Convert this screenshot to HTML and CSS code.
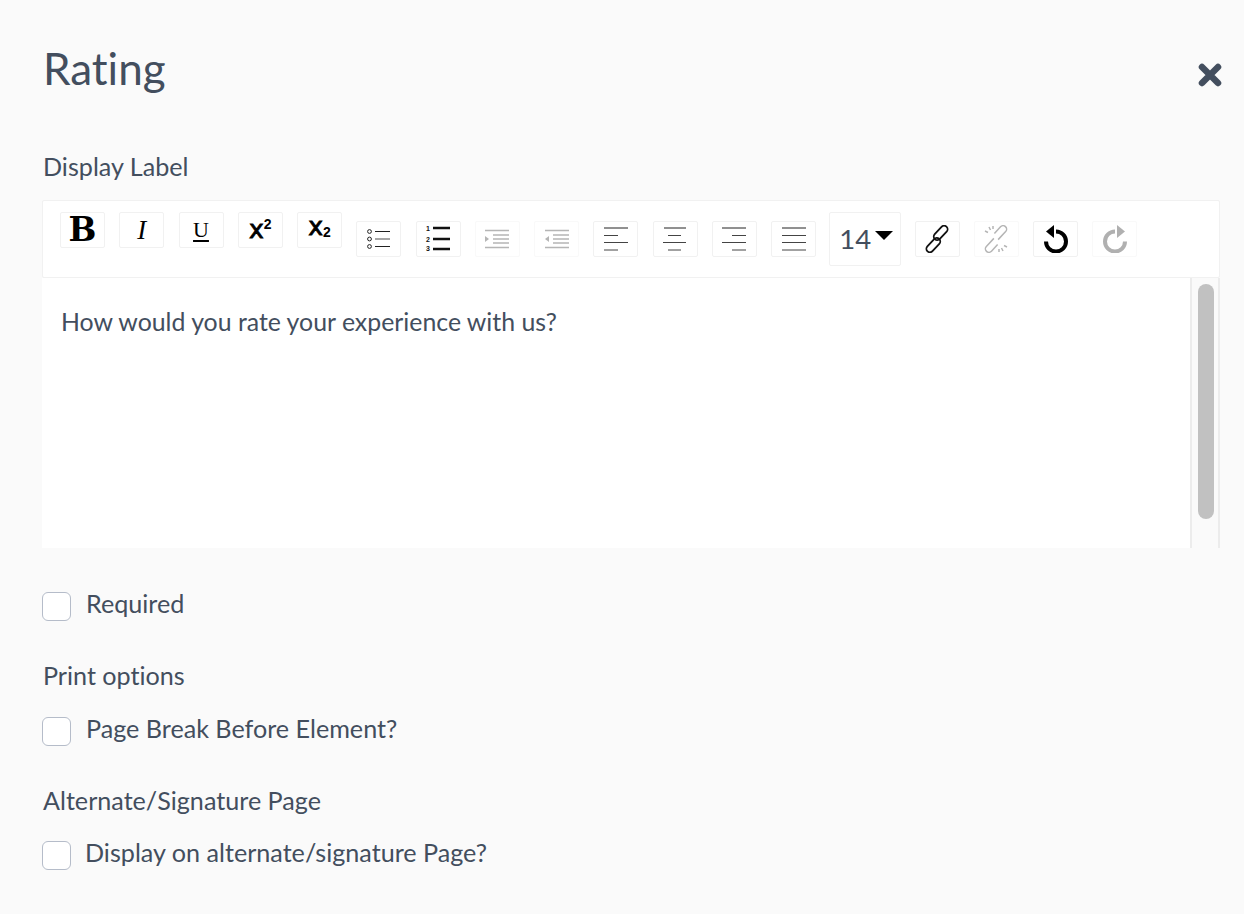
FILE: index.html
```html
<!DOCTYPE html>
<html lang="en">
<head>
<meta charset="utf-8">
<title>Rating</title>
<link rel="stylesheet" href="styles.css">
</head>
<body>
<main class="panel">
  <header class="head">
    <h1 class="title">Rating</h1>
    <button class="close" aria-label="Close">
      <svg width="24" height="24" viewBox="0 0 24 24"><path d="M4 4 20 20M20 4 4 20" stroke="#434e5e" stroke-width="6.5" stroke-linecap="round"/></svg>
    </button>
  </header>

  <div class="field-label display-label">Display Label</div>

  <div class="toolbar">
    <div class="btn top"><span class="g-b">B</span></div>
    <div class="btn top"><span class="g-i">I</span></div>
    <div class="btn top"><span class="g-u">U</span></div>
    <div class="btn top"><span class="g-x">x<sup>2</sup></span></div>
    <div class="btn top"><span class="g-x raised">x<sub>2</sub></span></div>

    <div class="btn"><svg width="23" height="20" viewBox="0 0 23 20"><g fill="none" stroke="#222"><circle cx="2.500" cy="2.500" r="1.900"/><circle cx="2.500" cy="10" r="1.900"/><circle cx="2.500" cy="17.500" r="1.900"/><path d="M8 2.500h15M8 17.500h15"/><path d="M8 10h15" stroke="#888" stroke-width="1.500"/></g></svg></div>
    <div class="btn"><svg width="26" height="26" viewBox="0 0 26 26"><path d="M8 2h17M8 13h17M8 23h17" stroke="#111" stroke-width="2.400"/><text x="1" y="5" class="mini">1</text><text x="1" y="16" class="mini">2</text><text x="1" y="25" class="mini">3</text></svg></div>
    <div class="btn off"><svg width="24" height="20" viewBox="0 0 24 20"><path d="M0 1.500h24M8 6h16M8 10h16M8 14h16M0 18.500h24" stroke="#b5b5b5" stroke-width="1.600"/><path d="M0 7l4 3-4 3z" fill="#b5b5b5"/></svg></div>
    <div class="btn off"><svg width="24" height="20" viewBox="0 0 24 20"><path d="M0 1.500h24M8 6h16M8 10h16M8 14h16M0 18.500h24" stroke="#b5b5b5" stroke-width="1.600"/><path d="M4 7l-4 3 4 3z" fill="#b5b5b5"/></svg></div>
    <div class="btn"><svg class="al" viewBox="0 0 24 24"><path d="M0 1h24" stroke="#222"/><path d="M0 8.500h14M0 15.500h24M0 23h14" stroke="#444"/></svg></div>
    <div class="btn"><svg class="al" viewBox="0 0 24 24"><path d="M1 1h22" stroke="#222"/><path d="M5 8.500h13M0 15.500h23M5 23h13" stroke="#444"/></svg></div>
    <div class="btn"><svg class="al" viewBox="0 0 24 24"><path d="M0 1h24" stroke="#222"/><path d="M10 8.500h14M0 15.500h24M10 23h14" stroke="#444"/></svg></div>
    <div class="btn"><svg class="al" viewBox="0 0 24 24"><path d="M0 1h24" stroke="#222"/><path d="M0 8.500h24M0 15.500h24M0 23h24" stroke="#444"/></svg></div>

    <div class="size"><span>14</span><i class="caret"></i></div>

    <div class="btn"><svg width="26" height="28" viewBox="0 0 26 28"><g fill="none" stroke="#111" stroke-width="1.800" transform="rotate(-47 13 14)"><rect x="-2.500" y="12" width="17" height="7" rx="3.500"/><rect x="11.500" y="9" width="17" height="7" rx="3.500"/></g></svg></div>
    <div class="btn off"><svg width="26" height="28" viewBox="0 0 26 28"><g fill="none" stroke="#b5b5b5" stroke-width="1.500"><g transform="rotate(-47 13 14)"><path d="M12 12H1a3.500 3.500 0 0 0 0 7H10"/><path d="M14 16H25a3.500 3.500 0 0 0 0-7H16"/></g><path d="M6 2l1.500 3M2 6l3 1.500M10 1v3M20 26l-1.500-3M24 22l-3-1.500M16 27v-3"/></g></svg></div>
    <div class="btn"><svg width="26" height="28" viewBox="0 0 26 28"><path d="M3 16.500A10 10 0 1 0 13 6.500" fill="none" stroke="#000" stroke-width="4"/><path d="M11 0v13L3 6.500z" fill="#000"/></svg></div>
    <div class="btn off"><svg width="26" height="28" viewBox="0 0 26 28"><path d="M23 16.500A10 10 0 1 1 13 6.500" fill="none" stroke="#b0b0b0" stroke-width="4"/><path d="M15 0v13l8-6.500z" fill="#b0b0b0"/></svg></div>
  </div>

  <div class="editor">
    <div class="content">How would you rate your experience with us?</div>
    <div class="track"><div class="thumb"></div></div>
  </div>

  <label class="check required"><span class="box"></span>Required</label>

  <div class="field-label print">Print options</div>
  <label class="check break"><span class="box"></span>Page Break Before Element?</label>

  <div class="field-label alt">Alternate/Signature Page</div>
  <label class="check sig"><span class="box"></span>Display on alternate/signature Page?</label>
</main>
</body>
</html>
```
FILE: styles.css
```css
* { box-sizing: border-box; }
html, body { margin: 0; height: 100%; }
body {
  background: #fafafa;
  color: #434e5e;
  font-family: Lato, "Open Sans", sans-serif;
  font-size: 25.15px;
  line-height: 30px;
  font-variant-ligatures: none;
  overflow: hidden;
}
.panel { padding: 0 24px 0 42px; }
.head { display: flex; justify-content: space-between; align-items: flex-start; height: 140px; padding-top: 41px; }
.title { margin: 0 0 0 1px; font-size: 44px; font-weight: 400; line-height: 54px; }
.close { border: 0; background: none; padding: 0; margin: 22px -2px 0 0; width: 24px; height: 24px; }
.close svg { display: block; }
.field-label { margin-left: 1px; }
.display-label { margin-top: 11px; height: 49px; }
.toolbar {
  display: flex;
  align-items: center;
  column-gap: 14.25px;
  height: 78px;
  padding: 0 0 0 17px;
  background: #fff;
  border: 1px solid #f1f1f1;
  border-radius: 2px;
}
.btn {
  flex: none;
  display: flex;
  align-items: center;
  justify-content: center;
  width: 45px;
  height: 36px;
  background: #fff;
  border: 1px solid #f1f1f1;
  border-radius: 2px;
  color: #000;
}
.btn.top { align-self: flex-start; margin-top: 11px; }
.btn.off { border-color: #f9f9f9; }
.g-b { display: block; font: 700 33px/36px "DejaVu Serif", serif; }
.g-i { font: italic 400 27px/30px "Liberation Serif", serif; }
.g-u { font: 400 22px/24px "Liberation Serif", serif; text-decoration: underline; text-underline-offset: 3px; }
.g-x { font: 400 25px/30px "DejaVu Sans", sans-serif; -webkit-text-stroke: .8px #000; }
.g-x sup, .g-x sub { font: 700 14px/0 "Liberation Sans", sans-serif; -webkit-text-stroke: 0; }
.g-x sup { vertical-align: 9px; }
.g-x sub { vertical-align: -2px; }
.raised { margin-top: -6px; }
.mini { font: 700 7px "Liberation Sans", sans-serif; fill: #111; }
.al { width: 24px; height: 24px; }
.size {
  flex: none;
  display: flex;
  align-items: center;
  gap: 4px;
  width: 72px;
  height: 54px;
  margin: 0 -1px;
  padding-left: 9px;
  background: #fff;
  border: 1px solid #f1f1f1;
  border-radius: 2px;
  font-size: 27.5px;
}
.caret { width: 0; height: 0; margin-top: -8px; border: 9px solid transparent; border-top: 9px solid #000; border-bottom: 0; }
.editor { display: flex; height: 270px; }
.content { flex: 1; background: #fff; padding: 28px 19px; line-height: 31px; font-size: 24.85px; }
.track { flex: none; width: 30px; padding: 6px 0 0 6px; border-left: 2px solid #ececec; border-right: 2px solid #ececec; }
.thumb { width: 16px; height: 235px; border-radius: 8px; background: #c1c1c1; }
.check { display: flex; align-items: flex-start; height: 30px; }
.box { flex: none; width: 29px; height: 29px; margin: 4px 15px 0 0; background: #fff; border: 1px solid #b5bcc9; border-radius: 6px; }
.required { margin-top: 40px; }
.print { margin-top: 42px; }
.break { margin-top: 23px; }
.alt { margin-top: 42px; }
.sig { margin-top: 22px; }
.sig .box { margin-right: 14px; }
```
